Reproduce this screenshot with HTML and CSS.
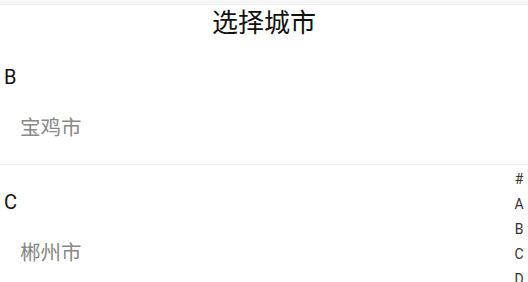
FILE: index.html
```html
<!DOCTYPE html>
<html lang="zh">
<head>
<meta charset="utf-8">
<title>选择城市</title>
<link rel="stylesheet" href="styles.css">
</head>
<body>
<div class="page">
  <header class="navbar">选择城市</header>
  <section class="group">
    <div class="letter">B</div>
    <div class="city">宝鸡市</div>
  </section>
  <section class="group">
    <div class="letter">C</div>
    <div class="city">郴州市</div>
  </section>
  <nav class="index">
    <span>#</span>
    <span>A</span>
    <span>B</span>
    <span>C</span>
    <span>D</span>
  </nav>
</div>
</body>
</html>
```
FILE: styles.css
```css
html, body {
  margin: 0;
  padding: 0;
  background: #fff;
}
body {
  font-family: Roboto, "Noto Sans CJK SC", sans-serif;
  color: #111;
  overflow: hidden;
}
.page {
  position: relative;
  width: 528px;
  height: 282px;
  padding-top: 4px;
  box-sizing: border-box;
  background: linear-gradient(#f7f7f7, #f7f7f7) top / 100% 4px no-repeat, #fff;
}
.navbar {
  height: 36px;
  line-height: 36px;
  text-align: center;
  font-size: 26px;
  border-top: 1px solid #eeeeee;
  box-sizing: border-box;
  color: #111;
}
.group {
  height: 125px;
  box-sizing: border-box;
  border-bottom: 1px solid #eeeeee;
  padding-top: 24px;
}
.letter {
  height: 26px;
  line-height: 26px;
  padding-left: 4px;
  font-size: 20px;
  color: #111;
}
.city {
  margin-top: 24px;
  height: 28px;
  line-height: 28px;
  padding-left: 20px;
  font-size: 20.5px;
  color: #888;
}
.index {
  position: absolute;
  right: 3px;
  top: 167px;
  width: 12px;
  display: flex;
  flex-direction: column;
  align-items: center;
}
.index span {
  height: 25px;
  line-height: 25px;
  font-size: 14px;
  color: #333;
}
```
